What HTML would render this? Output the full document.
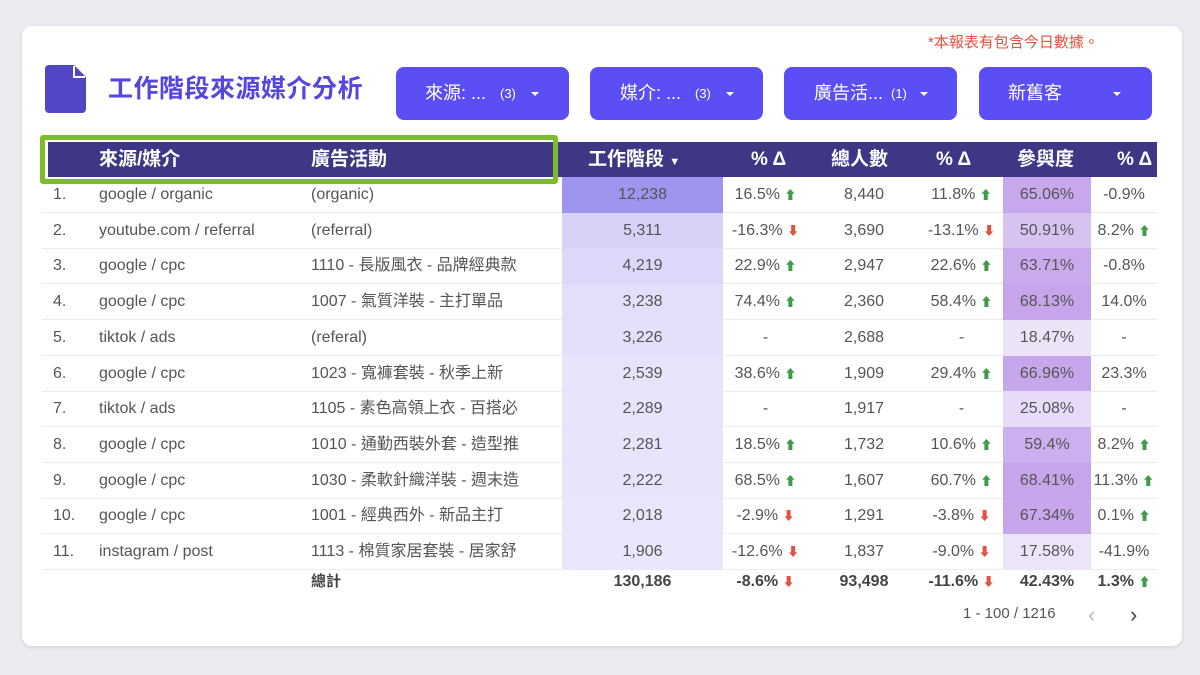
<!DOCTYPE html>
<html><head><meta charset="utf-8"><style>
*{margin:0;padding:0;box-sizing:border-box}
body{width:1200px;height:675px;background:#ebebf1;font-family:"Liberation Sans","Noto Sans CJK TC",sans-serif;position:relative;overflow:hidden}
.card{position:absolute;left:22px;top:26px;width:1160px;height:620px;background:#fff;border-radius:10px;box-shadow:0 1px 4px rgba(0,0,0,.12)}
.note{position:absolute;left:928px;top:33px;font-size:15px;color:#e0533f;line-height:20px}
.icon{position:absolute;left:45px;top:65px}
.title{position:absolute;left:108px;top:72px;font-size:25px;line-height:34px;font-weight:bold;color:#5446de;letter-spacing:0.5px}
.btn{position:absolute;top:67px;height:53px;width:173px;background:#5a4ef4;border-radius:8px;color:#fff;font-size:18px;line-height:53px}
.btn span{position:absolute;top:0}
.tri{position:absolute;top:25px;width:0;height:0;border-left:4px solid transparent;border-right:4px solid transparent;border-top:4px solid #fff}
.hdr{position:absolute;left:48px;top:142px;width:1109px;height:35px;background:#3d3785;color:#fff;font-size:19px;font-weight:bold}
.green{position:absolute;left:40px;top:135px;width:518px;height:49px;border:5px solid #7dbd2b;border-radius:3px}
.hdr div{position:absolute;white-space:nowrap;top:0;height:35px;line-height:35px}
.row div{position:absolute;white-space:nowrap;top:0;height:35px;line-height:35px}
.row{position:absolute;left:42px;width:1115px;height:36px;border-bottom:1px solid #ececec;font-size:16px;color:#555}
.c{text-align:center}
.up{color:#3d9b4a;font-size:12px}
.dn{color:#e0533f;font-size:12px}
</style></head><body>
<div class="card"></div>
<div class="note">*本報表有包含今日數據。</div>
<svg class="icon" width="42" height="48" viewBox="0 0 42 48"><path d="M4 0H29L41 12V44a4 4 0 0 1-4 4H4a4 4 0 0 1-4-4V4a4 4 0 0 1 4-4z" fill="#5346c6"/><path d="M31 0L41 10L41 0z" fill="#fff"/><path d="M29 1V12H40" fill="none" stroke="#fff" stroke-width="2"/></svg>
<div class="title">工作階段來源媒介分析</div>
<div class="btn" style="left:396px"><span style="left:29px">來源: ...</span><span style="left:104px;font-size:13px">(3)</span><i class="tri" style="left:135px"></i></div>
<div class="btn" style="left:590px"><span style="left:30px">媒介: ...</span><span style="left:105px;font-size:13px">(3)</span><i class="tri" style="left:136px"></i></div>
<div class="btn" style="left:784px"><span style="left:30px">廣告活...</span><span style="left:107px;font-size:13px">(1)</span><i class="tri" style="left:136px"></i></div>
<div class="btn" style="left:979px"><span style="left:29px">新舊客</span><i class="tri" style="left:134px"></i></div>
<div class="hdr">
<div style="left:51px">來源/媒介</div>
<div style="left:263px">廣告活動</div>
<div style="left:540px">工作階段 <span style="font-size:11px">▼</span></div>
<div style="left:703px">% Δ</div>
<div style="left:783px">總人數</div>
<div style="left:888px">% Δ</div>
<div style="left:969px">參與度</div>
<div style="left:1069px">% Δ</div>
</div>
<div class="green"></div>
<div id="rows"></div>
<div class="row" style="top:564px;border:none;font-weight:bold;color:#444">
<div style="left:269px;font-size:15px">總計</div>
<div class="c" style="left:520px;width:161px">130,186</div>
<div class="c" style="left:681px;width:85px">-8.6% <span class="dn">⬇</span></div>
<div class="c" style="left:766px;width:112px">93,498</div>
<div class="c" style="left:878px;width:83px">-11.6% <span class="dn">⬇</span></div>
<div class="c" style="left:961px;width:88px">42.43%</div>
<div class="c" style="left:1049px;width:66px">1.3% <span class="up">⬆</span></div>
</div>
<div style="position:absolute;left:963px;top:605px;font-size:15px;color:#555">1 - 100 / 1216</div>
<div style="position:absolute;left:1088px;top:602px;font-size:22px;color:#bbb">‹</div>
<div style="position:absolute;left:1130px;top:602px;font-size:22px;color:#444">›</div>
<script>
var d=[
["google / organic","(organic)","12,238","#9d95ee","16.5%",1,"8,440","11.8%",1,"65.06%","#c8a8ec","-0.9%",0],
["youtube.com / referral","(referral)","5,311","#d6d2f8","-16.3%",-1,"3,690","-13.1%",-1,"50.91%","#d7c2f1","8.2%",1],
["google / cpc","1110 - 長版風衣 - 品牌經典款","4,219","#dcd8f9","22.9%",1,"2,947","22.6%",1,"63.71%","#c9abed","-0.8%",0],
["google / cpc","1007 - 氣質洋裝 - 主打單品","3,238","#e2dffa","74.4%",1,"2,360","58.4%",1,"68.13%","#c6a5eb","14.0%",0],
["tiktok / ads","(referal)","3,226","#e3e0fa","-",0,"2,688","-",0,"18.47%","#ece3f9","-",0],
["google / cpc","1023 - 寬褲套裝 - 秋季上新","2,539","#e6e3fb","38.6%",1,"1,909","29.4%",1,"66.96%","#c7a7ec","23.3%",0],
["tiktok / ads","1105 - 素色高領上衣 - 百搭必","2,289","#e7e4fb","-",0,"1,917","-",0,"25.08%","#e7dbf7","-",0],
["google / cpc","1010 - 通勤西裝外套 - 造型推","2,281","#e7e4fb","18.5%",1,"1,732","10.6%",1,"59.4%","#ccafee","8.2%",1],
["google / cpc","1030 - 柔軟針織洋裝 - 週末造","2,222","#e8e5fb","68.5%",1,"1,607","60.7%",1,"68.41%","#c6a5eb","11.3%",1],
["google / cpc","1001 - 經典西外 - 新品主打","2,018","#e9e6fb","-2.9%",-1,"1,291","-3.8%",-1,"67.34%","#c7a6eb","0.1%",1],
["instagram / post","1113 - 棉質家居套裝 - 居家舒","1,906","#eae7fc","-12.6%",-1,"1,837","-9.0%",-1,"17.58%","#ede4f9","-41.9%",0]];
var h="";
function ar(v){return v>0?' <span class="up">⬆</span>':v<0?' <span class="dn">⬇</span>':'';}
d.forEach(function(r,i){var t=177+i*35.7;
h+='<div class="row" style="top:'+t+'px">'+
'<div style="left:11px">'+(i+1)+'.</div>'+
'<div style="left:57px">'+r[0]+'</div>'+
'<div style="left:269px">'+r[1]+'</div>'+
'<div class="c" style="left:520px;width:161px;height:36px;background:'+r[3]+'">'+r[2]+'</div>'+
'<div class="c" style="left:681px;width:85px">'+r[4]+ar(r[5])+'</div>'+
'<div class="c" style="left:766px;width:112px">'+r[6]+'</div>'+
'<div class="c" style="left:878px;width:83px">'+r[7]+ar(r[8])+'</div>'+
'<div class="c" style="left:961px;width:88px;height:36px;background:'+r[10]+'">'+r[9]+'</div>'+
'<div class="c" style="left:1049px;width:66px">'+r[11]+ar(r[12])+'</div></div>';});
document.getElementById("rows").innerHTML=h;
</script>
</body></html>
